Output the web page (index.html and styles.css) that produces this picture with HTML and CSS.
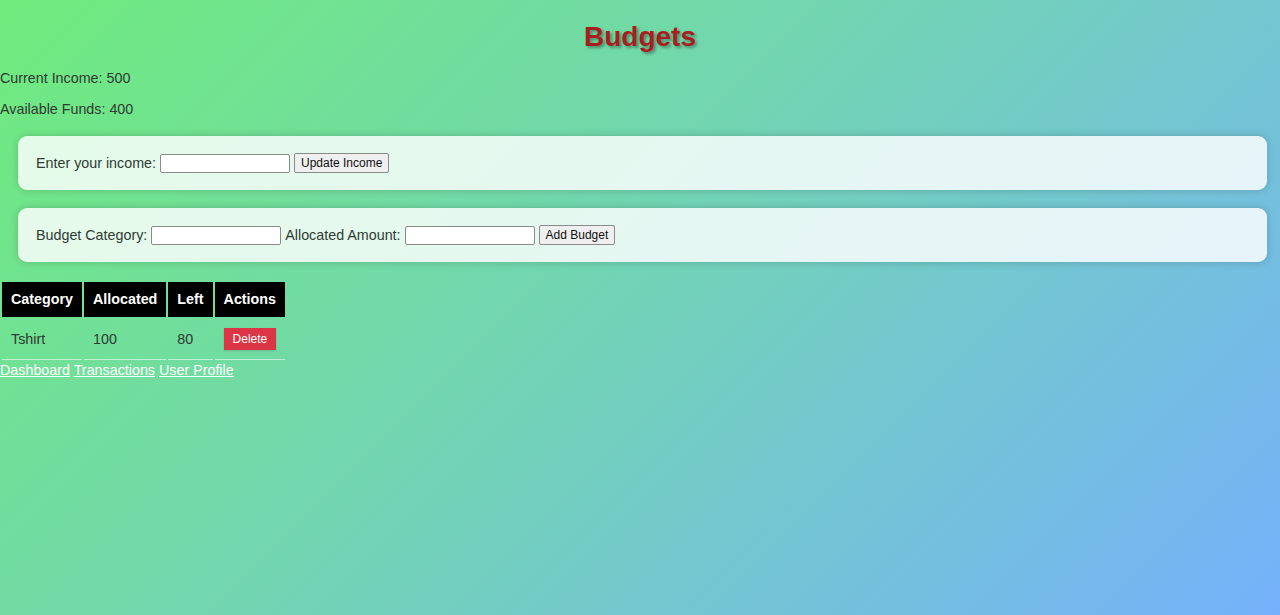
FILE: index.html
```html
<!DOCTYPE html>
<html>
<head>
<meta charset="utf-8">
<title>Budgets</title>
<link rel="stylesheet" href="styles.css">
</head>
<body>
<h1 class="title">Budgets</h1>
<p class="stat">Current Income: 500</p>
<p class="stat">Available Funds: 400</p>
<form class="card">
  <label class="lbl">Enter your income:</label>
  <input class="field" type="text">
  <button class="btn" type="button">Update Income</button>
</form>
<form class="card">
  <label class="lbl">Budget Category:</label>
  <input class="field" type="text">
  <label class="lbl">Allocated Amount:</label>
  <input class="field" type="text">
  <button class="btn" type="button">Add Budget</button>
</form>
<table class="budget-table">
  <thead>
    <tr><th>Category</th><th>Allocated</th><th>Left</th><th>Actions</th></tr>
  </thead>
  <tbody>
    <tr><td>Tshirt</td><td>100</td><td>80</td><td><button class="del" type="button">Delete</button></td></tr>
  </tbody>
</table>
<nav class="links">
  <a href="#">Dashboard</a>
  <a href="#">Transactions</a>
  <a href="#">User Profile</a>
</nav>
</body>
</html>
```
FILE: styles.css
```css
html, body {
  height: 100%;
}
body {
  margin: 0;
  font-family: "Liberation Sans", Arial, sans-serif;
  font-size: 14.3px;
  color: #2f3a33;
  background: linear-gradient(135deg, #70eb7c 0%, #72d2b8 50%, #75b1fb 100%);
  background-attachment: fixed;
}
.title {
  text-align: center;
  font-size: 28px;
  font-weight: bold;
  color: #a81e1e;
  text-shadow: 2px 2px 3px rgba(0, 0, 0, 0.35);
  margin: 21px 0 17px;
  line-height: 32px;
}
.stat {
  margin: 14px 0;
  line-height: 17px;
}
.card {
  margin: 18px 13px 18px 18px;
  padding: 17px 18px;
  background: rgba(255, 255, 255, 0.82);
  border-radius: 9px;
  box-shadow: 0 0 9px rgba(0, 0, 0, 0.18);
  display: flex;
  align-items: center;
  gap: 4px;
  height: 20px;
}
.lbl {
  font-size: 14.3px;
  color: #2f3a33;
}
.field {
  width: 124px;
  height: 15px;
  padding: 1px 2px;
  border: 1px solid #8a8a8a;
  border-radius: 2px;
  background: #fff;
  font-size: 12px;
}
.btn {
  font-family: "Liberation Sans", Arial, sans-serif;
  font-size: 12px;
  height: 20px;
  padding: 0 6px;
  background: #efefef;
  border: 1px solid #8a8a8a;
  border-radius: 2px;
  color: #111;
}
.budget-table {
  border-spacing: 2px;
  margin-top: 0;
}
.budget-table th {
  background: #000;
  color: #fff;
  font-weight: bold;
  padding: 9px 9px;
  text-align: left;
  line-height: 17px;
}
.budget-table td {
  padding: 9px 9px;
  line-height: 17px;
  border-bottom: 1px solid rgba(255, 255, 255, 0.55);
}
.del {
  background: #dc3545;
  color: #fff;
  border: none;
  font-family: "Liberation Sans", Arial, sans-serif;
  font-size: 12px;
  padding: 4px 9px;
  height: 22px;
  box-shadow: 0 1px 2px rgba(0,0,0,0.15);
}
.links {
  line-height: 17px;
}
.links a {
  color: #fff;
  text-decoration: underline;
}
```
